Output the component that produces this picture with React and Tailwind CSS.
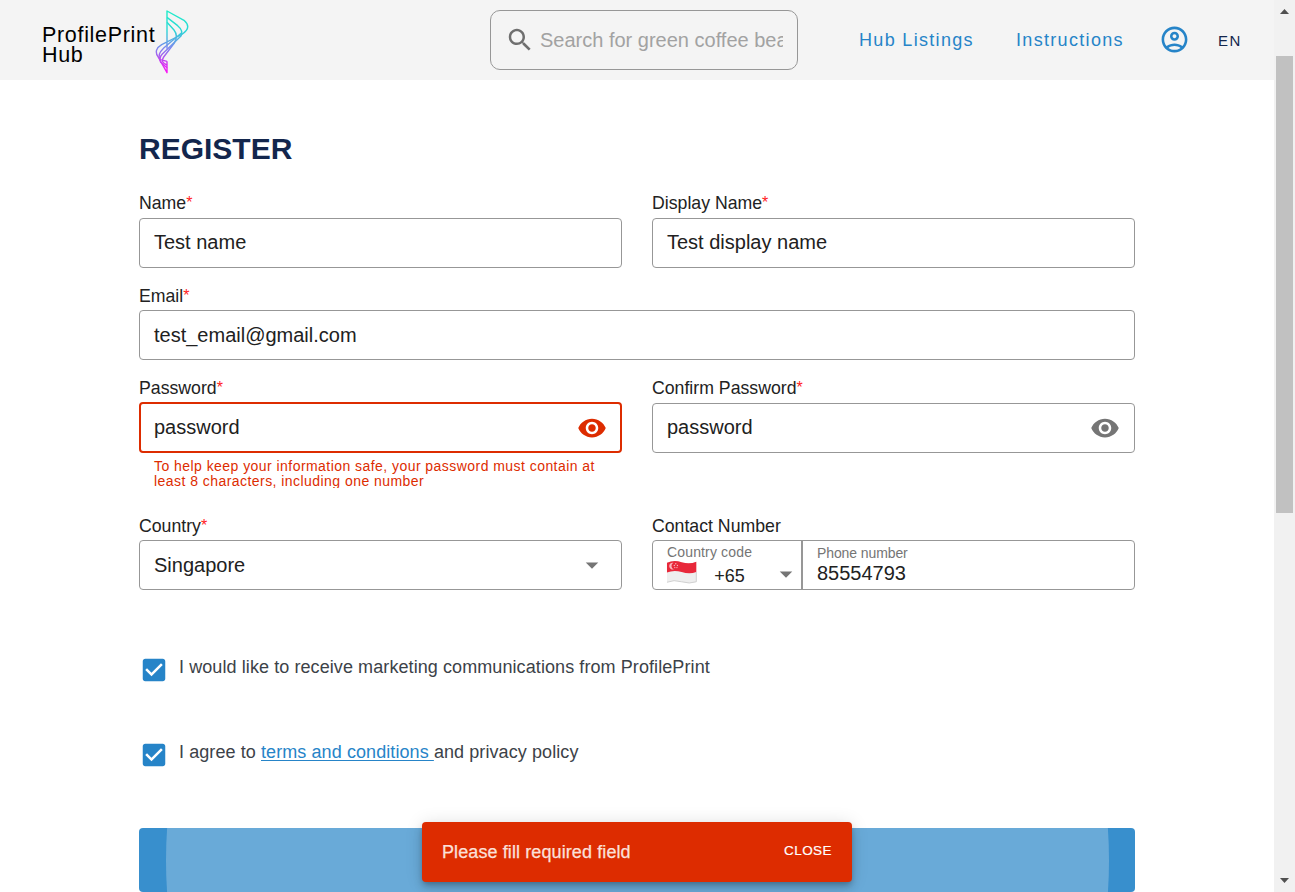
import React from "react";

const MD = {
  search: "M15.5 14h-.79l-.28-.27C15.41 12.59 16 11.11 16 9.5 16 5.91 13.09 3 9.5 3S3 5.91 3 9.5 5.91 16 9.5 16c1.61 0 3.09-.59 4.23-1.57l.27.28v.79l5 4.99L20.49 19l-4.99-5zm-6 0C7.01 14 5 11.99 5 9.5S7.01 5 9.5 5 14 7.01 14 9.5 11.99 14 9.5 14z",
  eye: "M12 4.5C7 4.5 2.73 7.61 1 12c1.73 4.39 6 7.5 11 7.5s9.27-3.11 11-7.5c-1.73-4.39-6-7.5-11-7.5zM12 17c-2.76 0-5-2.24-5-5s2.24-5 5-5 5 2.24 5 5-2.24 5-5 5zm0-8c-1.66 0-3 1.34-3 3s1.34 3 3 3 3-1.34 3-3-1.34-3-3-3z",
  drop: "M7 10l5 5 5-5z",
  account: "M12 2C6.48 2 2 6.48 2 12s4.48 10 10 10 10-4.48 10-10S17.52 2 12 2zM7.35 18.5C8.66 17.56 10.26 17 12 17s3.34.56 4.65 1.5C15.34 19.44 13.74 20 12 20s-3.34-.56-4.65-1.5zm10.79-1.38C16.45 15.8 14.32 15 12 15s-4.45.8-6.14 2.12C4.7 15.73 4 13.95 4 12c0-4.42 3.58-8 8-8s8 3.58 8 8c0 1.95-.7 3.73-1.86 5.12zM12 6c-1.93 0-3.5 1.57-3.5 3.5S10.07 13 12 13s3.5-1.57 3.5-3.5S13.93 6 12 6zm0 5c-.83 0-1.5-.67-1.5-1.5S11.17 8 12 8s1.5.67 1.5 1.5S12.83 11 12 11z",
  check: "M19 3H5c-1.11 0-2 .9-2 2v14c0 1.1.89 2 2 2h14c1.11 0 2-.9 2-2V5c0-1.1-.89-2-2-2zm-9 14l-5-5 1.41-1.41L10 14.17l7.59-7.59L19 8l-9 9z",
};

function Icon({ name, className }) {
  return (
    <svg viewBox="0 0 24 24" fill="currentColor" className={`shrink-0 ${className}`}>
      <path d={MD[name]} />
    </svg>
  );
}

function Logo() {
  return (
    <div className="flex w-[148px] items-start">
      <div className="w-[112px] pt-[15px] text-[21.5px] tracking-[0.68px] whitespace-nowrap text-black">
        <div className="h-5 leading-[22px]">ProfilePrint</div>
        <div className="h-5 leading-[22px]">Hub</div>
      </div>
      <svg viewBox="372 27 105 198" className="h-[66px] w-[35px] shrink-0" fill="none" strokeWidth="4.2" strokeLinejoin="round">
        <defs>
          <linearGradient id="logo" gradientUnits="userSpaceOnUse" x1="0" y1="30" x2="0" y2="220">
            <stop offset="0" stopColor="#1eeec9" />
            <stop offset="0.33" stopColor="#2ad6d6" />
            <stop offset="0.6" stopColor="#7c86ee" />
            <stop offset="0.8" stopColor="#c443f0" />
            <stop offset="1" stopColor="#ff10f5" />
          </linearGradient>
        </defs>
        <g stroke="url(#logo)">
          <path d="M411 146V33L462 61Q480 77 469 91Q463 100 446 108L395 134Q370 149 384 170L411 218V184" />
          <path d="M411 52L443 77Q461 92 453 108L397 162Q386 174 392 187L411 203" />
          <path d="M411 67L432 90Q446 108 433 129L401 171Q390 187 411 195" />
          <path d="M455 98L402 143Q379 165 391 179L411 184" />
        </g>
      </svg>
    </div>
  );
}

function Label({ children, required, low }) {
  return (
    <div className={`h-[30px] text-[17.7px] text-[#222] ${low ? "leading-8" : "leading-[30px]"}`}>
      {children}
      {required && <span className="relative -top-px text-[16px] text-[#f22]">*</span>}
    </div>
  );
}

function Field({ label, value, required, icon, iconClass = "", error, low }) {
  return (
    <div>
      <Label required={required} low={low}>{label}</Label>
      <div
        className={`flex items-center justify-between rounded text-xl leading-6 ${
          error ? "-mt-px h-[51px] border-2 border-[#dd2c00] pr-[13px] pb-px pl-[13px]" : "h-[50px] border border-[#979797] pr-3.5 pl-3.5"
        } ${low || error ? "" : "pb-0.5"}`}
      >
        <span>{value}</span>
        {icon && <Icon name={icon} className={iconClass} />}
      </div>
    </div>
  );
}

function Flag() {
  return (
    <svg viewBox="0 0 32 26" className="-ml-px h-[26px] w-8">
      <path d="M1 3.5Q8 .5 16 3T31 2.500V23Q24 25.500 16 23T1 23.500Z" fill="#eee" />
      <path d="M1 3.500Q8 .5 16 3T31 2.500V13Q24 15.500 16 13T1 13.500Z" fill="#e8283a" />
      <path d="M1 23.500Q8 20.500 16 23T31 23M31 13V23" stroke="#cfcfcf" fill="none" />
      <path d="M7.500 3.500A3.500 3.500 0 1 0 8 10.200A3.700 3.700 0 0 1 7.500 3.500Z" fill="#f9b5bb" />
      <g fill="#f9b5bb">
        <circle cx="10" cy="4.500" r=".7" />
        <circle cx="8.500" cy="6.300" r=".7" />
        <circle cx="11.700" cy="6.300" r=".7" />
        <circle cx="9" cy="8.500" r=".7" />
        <circle cx="11.200" cy="8.500" r=".7" />
      </g>
    </svg>
  );
}

function Consent({ children }) {
  return (
    <div className="flex h-[30px] items-start text-lg leading-6 tracking-[0.085px] text-[#3c4248]">
      <Icon name="check" className="h-[30px] w-[30px] text-[#2684c8]" />
      <span className="ml-2.5 whitespace-pre">{children}</span>
    </div>
  );
}

function Scrollbar() {
  return (
    <div className="flex h-full w-[21px] shrink-0 flex-col items-center bg-[#f1f1f1]">
      <svg viewBox="0 0 21 56" className="h-14 w-[21px]" fill="#505050">
        <path d="M6 14L10.500 9L15 14Z" />
      </svg>
      <div className="h-[457px] w-[17px] bg-[#c1c1c1]" />
      <svg viewBox="0 0 21 20" className="mt-auto h-5 w-[21px]" fill="#505050">
        <path d="M6 6L10.500 11L15 6Z" />
      </svg>
    </div>
  );
}

export default function App() {
  return (
    <div className="relative flex h-[892px] w-[1295px] overflow-hidden bg-white font-['Liberation_Sans',Arial,sans-serif] text-[#212121]">
      <div className="flex min-w-0 flex-1 flex-col">
        <header className="flex h-20 shrink-0 items-center bg-[#f4f4f4] pl-[42px]">
          <div className="self-start pt-[9px]">
            <Logo />
          </div>
          <div className="ml-[300px] flex h-[60px] w-[308px] items-center rounded-[10px] border border-[#979797] pr-3.5 pl-[13.5px]">
            <Icon name="search" className="h-[30px] w-[30px] text-[#6f6f6f]" />
            <span className="ml-[5.5px] flex-1 overflow-hidden text-xl whitespace-nowrap text-[#a2a2a2]">Search for green coffee beans</span>
          </div>
          <nav className="ml-[61px] flex items-center text-lg tracking-[1.32px] text-[#2684c8]">
            <span className="w-[157px]">Hub Listings</span>
            <span className="w-[142.5px]">Instructions</span>
            <Icon name="account" className="-mt-0.5 h-[31px] w-[31px]" />
            <span className="ml-[28.5px] pt-0.5 text-[15px] tracking-[1.4px] text-[#13264d]">EN</span>
          </nav>
        </header>
        <main className="w-[1135px] pt-[49px] pl-[139px]">
          <h1 className="h-[59px] text-[30px] leading-10 font-bold text-[#13264d]">REGISTER</h1>
          <div className="grid grid-cols-2 gap-x-[30px]">
            <Field label="Name" value="Test name" required />
            <Field label="Display Name" value="Test display name" required />
          </div>
          <div className="mt-3">
            <Field label="Email" value="test_email@gmail.com" required low />
          </div>
          <div className="mt-[13px] grid h-[137px] grid-cols-2 gap-x-[30px]">
            <div>
              <Field label="Password" value="password" required icon="eye" iconClass="mt-px h-[30px] w-[30px] text-[#dd2c00]" error />
              <p className="mt-1.5 h-[29px] overflow-hidden pl-[15px] text-sm leading-[15px] tracking-[0.45px] text-[#dd2c00]">
                To help keep your information safe, your password must contain at least 8 characters, including one number
              </p>
            </div>
            <Field label="Confirm Password" value="password" required icon="eye" iconClass="mt-0.5 h-[30px] w-[30px] text-[#757575]" />
          </div>
          <div className="grid grid-cols-2 gap-x-[30px]">
            <Field label="Country" value="Singapore" required icon="drop" iconClass="h-[30px] w-[30px] text-[#757575]" low />
            <div>
              <Label low>Contact Number</Label>
              <div className="flex h-[50px] rounded border border-[#979797]">
                <div className="w-[150px] border-r-2 border-[#979797] pl-3.5">
                  <div className="h-4 pt-[3px] text-sm leading-4 tracking-[0.15px] text-[#757575]">Country code</div>
                  <div className="flex h-[30px] items-center">
                    <Flag />
                    <span className="mt-[7px] ml-[17px] w-[58px] text-lg leading-6">+65</span>
                    <Icon name="drop" className="mt-1 h-[30px] w-[30px] text-[#757575]" />
                  </div>
                </div>
                <div className="pt-1 pl-3.5">
                  <div className="text-sm leading-4 tracking-[-0.1px] text-[#757575]">Phone number</div>
                  <div className="text-xl leading-6">85554793</div>
                </div>
              </div>
            </div>
          </div>
          <div className="mt-[65px]">
            <Consent>I would like to receive marketing communications from ProfilePrint</Consent>
          </div>
          <div className="mt-[55px]">
            <Consent>
              I agree to <span className="text-[#2684c8] underline underline-offset-2">terms and conditions </span>and privacy policy
            </Consent>
          </div>
          <button className="mt-[58px] flex h-16 w-full items-center justify-center overflow-hidden rounded bg-[#388fcd]">
            <span className="h-[943px] w-[943px] shrink-0 rounded-full bg-[#69aad8]" />
          </button>
        </main>
      </div>
      <Scrollbar />
      <div className="absolute top-[822px] left-[422px] flex h-[60px] w-[430px] items-center justify-between rounded bg-[#dd2c00] pr-5 pl-5 text-white shadow-[0_3px_5px_-1px_rgba(0,0,0,0.2),0_6px_10px_0_rgba(0,0,0,0.14),0_1px_18px_0_rgba(0,0,0,0.12)]">
        <span className="text-lg tracking-[0.1px] text-[#fbe0da] [-webkit-text-stroke:0.25px_#fbe0da]">Please fill required field</span>
        <span className="pb-px text-[13.5px] tracking-[0.45px] [-webkit-text-stroke:0.2px_white]">CLOSE</span>
      </div>
    </div>
  );
}
